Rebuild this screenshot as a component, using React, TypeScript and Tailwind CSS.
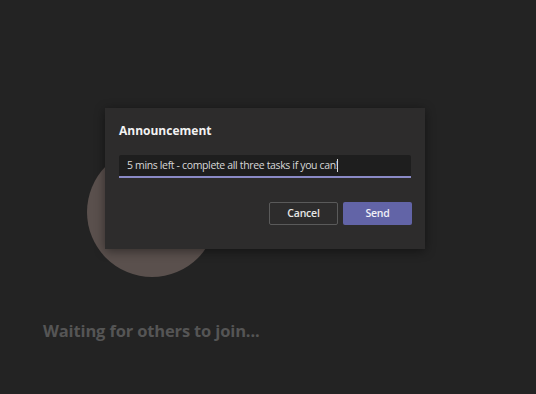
import React from "react";

export default function App() {
  return (
    <div
      className="relative w-[536px] h-[394px] overflow-hidden bg-[#232323]"
      style={{ fontFamily: '"Open Sans", "Noto Sans", sans-serif' }}
    >
      <div className="flex flex-col pt-[147px]">
        <div className="ml-[87px] w-[130px] h-[130px] rounded-full bg-[#5a504d]" />
        <div className="mt-[42px] ml-[43px] text-[16.5px] leading-[24px] font-bold text-[#555555] tracking-[-0.15px]">
          Waiting for others to join...
        </div>
      </div>

      <div className="absolute left-[105px] top-[108px] w-[320px] h-[141px] bg-[#2d2c2c] shadow-[0_2px_10px_rgba(0,0,0,0.45)] flex flex-col px-[14px] pt-[14px]">
        <div className="text-[12px] leading-[18px] font-bold text-[#f2f2f2] tracking-[0px]">Announcement</div>
        <div className="mt-[15px] h-[23px] bg-[#1e1e1e] border-b-2 border-[#8a8ac6] rounded-t-[2px] flex items-center pl-[8px] text-[10.5px] tracking-[-0.35px] text-[#d8d8d8]">
          <span>5 mins left - complete all three tasks if you can!</span>
          <span className="inline-block w-px h-[13px] bg-[#d8d8d8] ml-[-1px]" />
        </div>
        <div className="mt-[24px] flex justify-end gap-[5px]">
          <button className="w-[69px] h-[23px] border border-[#5a5a5a] rounded-[2px] text-[10.5px] tracking-[-0.2px] font-semibold text-[#e6e6e6] bg-transparent">
            Cancel
          </button>
          <button className="w-[69px] h-[23px] rounded-[2px] text-[10.5px] tracking-[-0.2px] font-semibold text-[#f0f0f8] bg-[#6264a7] mr-[-1px]">
            Send
          </button>
        </div>
      </div>
    </div>
  );
}
